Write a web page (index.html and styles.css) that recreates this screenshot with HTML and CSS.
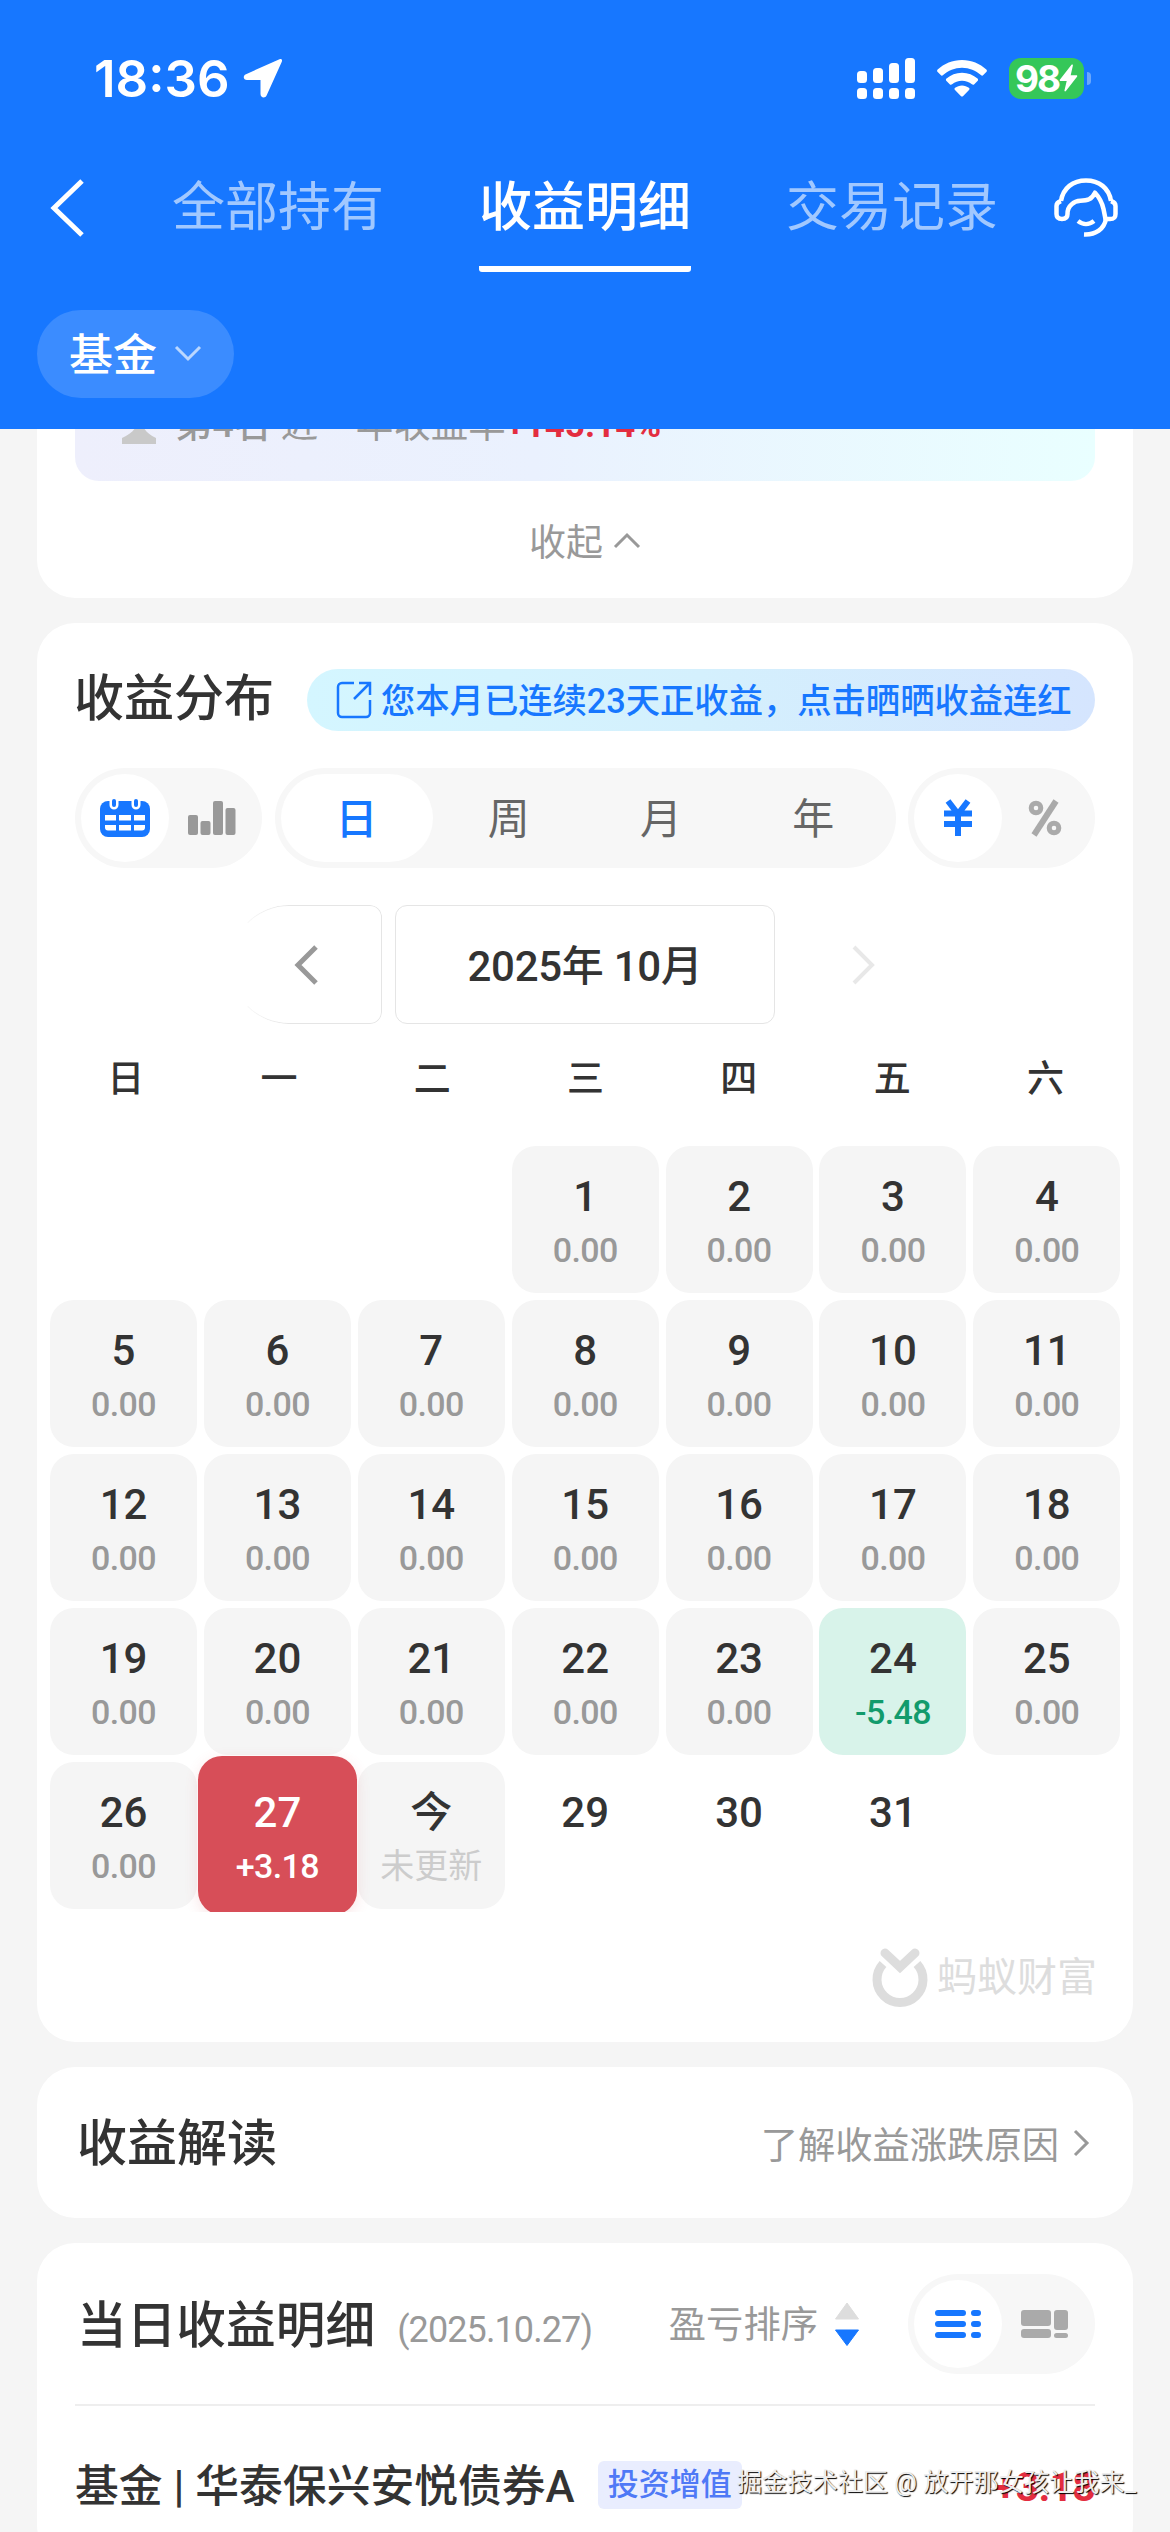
FILE: index.html
```html
<!DOCTYPE html>
<html lang="zh-CN">
<head>
  <meta charset="UTF-8">
  <meta name="viewport" content="width=device-width, initial-scale=1.0">
  <title>收益明细</title>
  <link rel="stylesheet" href="styles.css">
</head>
<body>
  <header class="header">
    <div class="status">
      <span class="time">18:36</span>
      <svg class="location" width="40" height="40" viewBox="0 0 40 40"><path d="M36.5 1.2 3 16.2c-3.600 1.600-2.600 5.800 1 5.800h13.500v14c0 4 4.800 4.600 6.200 1.200L38.800 3.700c.8-2-.4-3.300-2.300-2.500z" fill="#fff"/></svg>
      <div class="status-right">
        <svg width="58" height="41" viewBox="0 0 58 41" fill="#fff">
          <rect x="0" y="13" width="10" height="12" rx="3.500"/><rect x="16" y="10" width="10" height="15" rx="3.500"/><rect x="32" y="5" width="10" height="20" rx="3.500"/><rect x="48" y="0" width="10" height="25" rx="3.500"/>
          <rect x="0" y="30" width="10" height="11" rx="3.500"/><rect x="16" y="30" width="10" height="11" rx="3.500"/><rect x="32" y="30" width="10" height="11" rx="3.500"/><rect x="48" y="30" width="10" height="11" rx="3.500"/>
        </svg>
        <svg class="wifi" width="50" height="37" viewBox="0 0 50 37" fill="#fff">
          <path d="M25 0C15.500 0 7 3.600.7 9.600c-.8.8-.8 1.700 0 2.500l3 3c.7.700 1.600.700 2.400 0C11.200 10.500 17.700 7.700 25 7.700s13.800 2.800 18.900 7.400c.8.700 1.700.700 2.400 0l3-3c.8-.8.8-1.700 0-2.500C43 3.600 34.500 0 25 0z"/>
          <path d="M25 12.700c-6 0-11.400 2.200-15.500 5.900-.8.800-.8 1.700 0 2.500l3.200 3.100c.7.700 1.600.700 2.400.1 2.700-2.300 6.100-3.600 9.900-3.600s7.200 1.300 9.900 3.600c.8.600 1.700.600 2.400-.1l3.200-3.100c.8-.8.8-1.700 0-2.500-4.100-3.700-9.500-5.900-15.500-5.900z"/>
          <path d="M25 25.400c-2.600 0-5 .9-6.900 2.400-.8.700-.8 1.500-.1 2.200l5.800 6c.8.800 1.600.800 2.400 0l5.800-6c.7-.7.700-1.500-.1-2.200-1.900-1.500-4.300-2.400-6.900-2.400z"/>
        </svg>
        <div class="battery">98<svg width="19" height="28" viewBox="0 0 19 28"><path d="M12.500.8 1 15.500c-.6.800-.2 1.500.7 1.500h6L5.500 26.300c-.3 1.200.7 1.500 1.400.7L18 12.700c.6-.8.200-1.500-.7-1.500h-5.600L13.900 1.500c.2-1.100-.7-1.500-1.400-.7z" fill="#fff"/></svg></div>
        <span class="battery-cap"></span>
      </div>
    </div>
    <nav class="nav">
      <svg class="back" width="36" height="58" viewBox="0 0 36 58"><path d="M32 2 4 29l28 27" fill="none" stroke="#fff" stroke-width="5"/></svg>
      <div class="tabs">
        <a class="tab">全部持有</a>
        <a class="tab active">收益明细</a>
        <a class="tab">交易记录</a>
      </div>
      <svg class="service" width="64" height="60" viewBox="0 0 64 60" fill="none" stroke="#fff" stroke-width="4.500" stroke-linejoin="round">
        <path d="M7 23C9 10 19 2.500 32 2.500S55 10 57 23"/>
        <path d="M7 23c-3 1-4.500 3-4.500 5v8c0 3.500 2 5 5.500 5s5.500-1.500 5.500-5c0-5 1-7 4-9.500 3-3 6-3.700 9-3.800 7 0 11-1 14.500-8C45 19 48 24 49.500 31l2 10H56c4 0 5.500-1.500 5.500-5v-8c0-2-1.500-4-4.500-5"/>
        <path d="M52 41c-2 10-10 16-22 15.500M24 43c5 4 11 4 16 0"/>
      </svg>
    </nav>
    <div class="filter"><span>基金</span><svg width="28" height="18" viewBox="0 0 28 18"><path d="m2 2 12 12L26 2" fill="none" stroke="#fff" stroke-opacity=".65" stroke-width="3"/></svg></div>
  </header>

  <main class="main">
    <section class="card rank-card">
      <div class="rank">
        <svg class="medal" width="36" height="24" viewBox="0 0 36 24"><path d="M1 25v-6C7 16 12 13 14 9h9c2 4 6 7 12 10v6z" fill="#c9c9c9"/></svg>
        <p><span class="rank-name">第4名</span> 近一年收益率<b>+145.14%</b></p>
      </div>
      <div class="collapse">收起<svg width="28" height="18" viewBox="0 0 28 18"><path d="M2 16 14 4l12 12" fill="none" stroke="#999" stroke-width="3"/></svg></div>
    </section>

    <section class="card profit">
      <div class="profit-head">
        <h2>收益分布</h2>
        <a class="share"><svg width="36" height="38" viewBox="0 0 36 38" fill="none" stroke="#1777ff" stroke-width="2.500"><path d="M18 2H6a4 4 0 0 0-4 4v26a4 4 0 0 0 4 4h24a4 4 0 0 0 4-4V19M23 2h11v12M33 3 18 18"/></svg><span>您本月已连续23天正收益，点击晒晒收益连红</span></a>
      </div>

      <div class="switches">
        <div class="seg seg-small">
          <span class="on"><svg width="50" height="38" viewBox="0 0 50 38">
            <rect x="0" y="2" width="50" height="36" rx="8" fill="#1777ff"/>
            <path d="M5 16h11v5.500H5zM19 16h12v5.500H19zM34 16h11v5.500H34zM5 26h11v5.500H8q-3 0-3-3zM19 26h12v5.500H19zM34 26h11v2.500q0 3-3 3h-8z" fill="#fff"/>
            <path d="M14 2v4M36 2v4" stroke="#fff" stroke-width="9" stroke-linecap="round"/>
            <path d="M14 2v4M36 2v4" stroke="#1777ff" stroke-width="4" stroke-linecap="round"/>
          </svg></span>
          <span><svg width="48" height="34" viewBox="0 0 48 34" fill="#999"><rect x="0" y="14" width="10" height="20" rx="2"/><rect x="12.500" y="20" width="10" height="14" rx="2"/><rect x="25" y="0" width="10" height="34" rx="2"/><rect x="37.500" y="7" width="10" height="27" rx="2"/></svg></span>
        </div>
        <div class="seg seg-period">
          <span class="on">日</span><span>周</span><span>月</span><span>年</span>
        </div>
        <div class="seg seg-small">
          <span class="on"><svg width="28" height="36" viewBox="0 0 28 36" fill="none" stroke="#1777ff" stroke-width="6"><path d="m4 1 10 13L24 1M0 13.500h28M0 24h28M14 12v24"/></svg></span>
          <span><svg width="32" height="36" viewBox="0 0 32 36" fill="none" stroke="#aaa" stroke-width="5"><circle cx="7" cy="8" r="4.800"/><circle cx="25" cy="28" r="4.800"/><path d="M27 1 5 35" stroke-width="6"/></svg></span>
        </div>
      </div>

      <div class="month">
        <span class="prev"><svg width="26" height="40" viewBox="0 0 26 40"><path d="M23 2 5 20l18 18" fill="none" stroke="#999" stroke-width="5"/></svg></span>
        <span class="month-name">2025年 10月</span>
        <span class="next"><svg width="26" height="40" viewBox="0 0 26 40"><path d="m3 2 18 18L3 38" fill="none" stroke="#e8e8e8" stroke-width="4"/></svg></span>
      </div>

      <div class="week">
        <span>日</span><span>一</span><span>二</span><span>三</span><span>四</span><span>五</span><span>六</span>
      </div>

      <div class="days">
        <div class="day first"><b>1</b><i>0.00</i></div>
        <div class="day"><b>2</b><i>0.00</i></div>
        <div class="day"><b>3</b><i>0.00</i></div>
        <div class="day"><b>4</b><i>0.00</i></div>
        <div class="day"><b>5</b><i>0.00</i></div>
        <div class="day"><b>6</b><i>0.00</i></div>
        <div class="day"><b>7</b><i>0.00</i></div>
        <div class="day"><b>8</b><i>0.00</i></div>
        <div class="day"><b>9</b><i>0.00</i></div>
        <div class="day"><b>10</b><i>0.00</i></div>
        <div class="day"><b>11</b><i>0.00</i></div>
        <div class="day"><b>12</b><i>0.00</i></div>
        <div class="day"><b>13</b><i>0.00</i></div>
        <div class="day"><b>14</b><i>0.00</i></div>
        <div class="day"><b>15</b><i>0.00</i></div>
        <div class="day"><b>16</b><i>0.00</i></div>
        <div class="day"><b>17</b><i>0.00</i></div>
        <div class="day"><b>18</b><i>0.00</i></div>
        <div class="day"><b>19</b><i>0.00</i></div>
        <div class="day"><b>20</b><i>0.00</i></div>
        <div class="day"><b>21</b><i>0.00</i></div>
        <div class="day"><b>22</b><i>0.00</i></div>
        <div class="day"><b>23</b><i>0.00</i></div>
        <div class="day loss"><b>24</b><i>-5.48</i></div>
        <div class="day"><b>25</b><i>0.00</i></div>
        <div class="day"><b>26</b><i>0.00</i></div>
        <div class="day selected"><b>27</b><i>+3.18</i></div>
        <div class="day today"><b>今</b><i>未更新</i></div>
        <div class="day future"><b>29</b></div>
        <div class="day future"><b>30</b></div>
        <div class="day future"><b>31</b></div>
      </div>

      <div class="brand">
        <svg width="56" height="57" viewBox="0 0 56 57" fill="none" stroke="#ddd"><path d="M11 15a23 23 0 1 0 34 0" stroke-width="9"/><path d="m13 4 15 14L43 4" stroke-width="9" stroke-linecap="round"/></svg>
        <span>蚂蚁财富</span>
      </div>
    </section>

    <section class="card explain">
      <h2>收益解读</h2>
      <a>了解收益涨跌原因<svg width="18" height="28" viewBox="0 0 18 28"><path d="m2 2 12 12L2 26" fill="none" stroke="#999" stroke-width="3"/></svg></a>
    </section>

    <section class="card detail">
      <div class="detail-head">
        <h2>当日收益明细</h2>
        <span class="date">(2025.10.27)</span>
        <span class="sort"><span>盈亏排序</span><svg width="26" height="44" viewBox="0 0 26 44"><path d="M13 1 24.500 17h-23z" fill="#ddd" stroke="#ddd" stroke-linejoin="round"/><path d="M1.500 28h23L13 43.500z" fill="#1777ff" stroke="#1777ff" stroke-linejoin="round"/></svg></span>
        <div class="seg seg-small">
          <span class="on"><svg width="48" height="30" viewBox="0 0 48 30" stroke="#1777ff" stroke-width="6" stroke-linecap="round"><path d="M4 4h25M4 15h25M4 26h25M40 4h4M40 15h4M40 26h4"/></svg></span>
          <span><svg width="48" height="30" viewBox="0 0 48 30" fill="#aaa"><rect x="0" y="1" width="30" height="16" rx="3"/><rect x="0" y="20" width="30" height="9" rx="3"/><rect x="33" y="1" width="14" height="20" rx="3"/><rect x="33" y="24" width="14" height="5" rx="2.500"/></svg></span>
        </div>
      </div>
      <div class="fund">
        <span class="fund-name">基金 | 华泰保兴安悦债券A</span>
        <span class="tag">投资增值</span>
        <span class="gain">+3.18</span>
      </div>
    </section>
  </main>
  <div class="watermark">掘金技术社区 @ 放开那女孩让我来_</div>
</body>
</html>
```

FILE: styles.css
```css
* {
  box-sizing: border-box;
}

body {
  position: relative;
  width: 1170px;
  height: 2532px;
  margin: 0;
  overflow: hidden;
  background-color: #f5f5f5;
  color: #333;
  font-family: Roboto, "Noto Sans CJK SC", sans-serif;
}

svg {
  display: block;
  flex: none;
  overflow: visible;
}

h2, p {
  margin: 0;
}

h2 {
  font-size: 50px;
  font-weight: 500;
  line-height: 60px;
  white-space: nowrap;
}

/* 顶部 */
.header {
  height: 429px;
  background-color: #1777ff;
  color: #fff;
}

.status {
  display: flex;
  align-items: center;
  height: 156px;
  padding: 0 79px 0 94px;
}

.time {
  width: 149px;
  font-family: Inter, sans-serif;
  font-size: 51px;
  font-weight: 600;
}

.status-right {
  display: flex;
  align-items: center;
  margin-left: auto;
}

.wifi {
  margin: 0 22px;
}

.battery {
  display: flex;
  align-items: center;
  justify-content: center;
  width: 75px;
  height: 41px;
  border-radius: 12px;
  background-color: #35c759;
  font-family: Inter, sans-serif;
  font-size: 37px;
  font-weight: 700;
  letter-spacing: -2px;
}

.battery-cap {
  width: 4px;
  height: 13px;
  margin-left: 3px;
  border-radius: 0 4px 4px 0;
  background-color: #6ba8fc;
}

.nav {
  display: flex;
  align-items: center;
  height: 104px;
  padding: 0 52px 0 50px;
}

.tabs {
  display: flex;
  gap: 95px;
  margin-left: 86px;
}

.tab {
  font-size: 53px;
  line-height: 107px;
  color: #a1c8ff;
}

.tab.active {
  height: 117px;
  border-bottom: 6px solid #fff;
  margin-bottom: -12px;
  border-radius: 3px;
  color: #fff;
  font-weight: 500;
}

.service {
  margin-left: auto;
}

.filter {
  display: flex;
  align-items: center;
  gap: 17px;
  width: 197px;
  height: 88px;
  margin: 50px 0 0 37px;
  padding-left: 32px;
  border-radius: 44px;
  background-color: #3b8cff;
  font-size: 44px;
  font-weight: 500;
}

.filter span {
  margin-top: -4px;
}

/* 卡片 */
.main {
  display: flex;
  flex-direction: column;
  gap: 25px;
  padding: 0 37px;
}

.card {
  border-radius: 38px;
  background-color: #fff;
}

.rank-card {
  height: 169px;
  border-radius: 0 0 38px 38px;
}

.rank {
  display: flex;
  height: 52px;
  margin: 0 38px;
  padding-left: 46px;
  overflow: hidden;
  border-radius: 0 0 24px 24px;
  background: linear-gradient(90deg, #eeeffc, #eaf1fe 45%, #e9ffff);
  color: #999;
  font-size: 37.500px;
}

.medal {
  margin-top: -10px;
}

.rank p {
  margin: -35px 0 0 18px;
  line-height: 60px;
  white-space: nowrap;
}

.rank-name {
  font-weight: 500;
}

.rank b {
  color: #e32d40;
  font-weight: 700;
  font-size: 35px;
}

.collapse {
  display: flex;
  align-items: center;
  justify-content: center;
  gap: 10px;
  height: 117px;
  padding-top: 1px;
  color: #999;
  font-size: 37px;
}

.profit {
  height: 1419px;
  overflow: hidden;
}

.profit-head {
  display: flex;
  align-items: center;
  justify-content: space-between;
  height: 62px;
  margin: 46px 38px 0;
}

.profit-head h2 {
  margin: -3px 0 0 -1px;
}

.share {
  display: flex;
  align-items: center;
  gap: 9px;
  width: 788px;
  height: 62px;
  padding-left: 29px;
  border-radius: 31px;
  background: linear-gradient(90deg, #d4f6ff, #d4f0fd 50%, #d5e5fe);
  color: #1777ff;
  font-size: 34.300px;
  font-weight: 500;
  white-space: nowrap;
}

.share span {
  margin-top: -5px;
}

.switches {
  display: flex;
  justify-content: space-between;
  margin: 37px 38px 0;
}

.seg {
  display: flex;
  height: 100px;
  padding: 6px;
  border-radius: 50px;
  background-color: #f7f7f7;
}

.seg span {
  display: flex;
  flex: 1;
  align-items: center;
  justify-content: center;
  border-radius: 44px;
  color: #666;
  font-size: 42px;
}

.seg .on {
  background-color: #fff;
  color: #1777ff;
  font-weight: 500;
}

.seg-small {
  width: 187px;
}

.seg-period {
  width: 621px;
}

.seg-period span {
  padding-bottom: 5px;
}

.month {
  display: flex;
  gap: 13px;
  height: 119px;
  margin: 37px 0 0 193px;
}

.month span {
  display: flex;
  align-items: center;
  justify-content: center;
}

.prev {
  width: 152px;
  border: 1px solid #e5e5e5;
  border-left-color: transparent;
  border-radius: 59px 12px 12px 59px;
  -webkit-mask-image: linear-gradient(90deg, transparent, #000 40%);
  mask-image: linear-gradient(90deg, transparent, #000 40%);
}

.month .month-name {
  width: 380px;
  padding-bottom: 4px;
  border: 1px solid #e5e5e5;
  border-radius: 12px;
  font-size: 42px;
  font-weight: 500;
  letter-spacing: -.3px;
}

.next {
  width: 152px;
}

.week {
  display: grid;
  grid-template-columns: repeat(7, 153.300px);
  margin: 26px 0 0 12px;
  font-size: 37px;
  font-weight: 500;
  line-height: 60px;
  text-align: center;
}

.days {
  display: grid;
  grid-template-columns: repeat(7, 147px);
  grid-auto-rows: 147px;
  gap: 6.900px;
  margin: 36px 0 0;
  padding: 0 13px 3px;
  overflow: hidden;
}

.day {
  display: flex;
  flex-direction: column;
  align-items: center;
  padding-top: 26px;
  border-radius: 24px;
  background-color: #f5f5f5;
}

.day.first {
  grid-column: 4;
}

.day b {
  font-size: 42px;
  font-weight: 500;
  line-height: 50px;
}

.day i {
  margin-top: 8px;
  color: #999;
  font-size: 34px;
  font-style: normal;
  font-weight: 500;
  letter-spacing: -.6px;
  line-height: 40px;
}

.day.loss {
  background-color: #d8f3ea;
}

.day.loss i {
  color: #129b6c;
}

/* 选中的日期比其他格子大一圈 */
.day.selected {
  z-index: 1;
  margin: -6px;
  padding-top: 32px;
  background-color: #d74e58;
  box-shadow: 0 4px 14px rgba(215, 78, 88, .15);
  color: #fff;
}

.day.selected i {
  color: #fff;
}

.day.today i {
  color: #ccc;
  font-weight: 400;
  letter-spacing: 0;
}

.day.future {
  background: none;
}

.brand {
  display: flex;
  align-items: center;
  justify-content: flex-end;
  gap: 9px;
  margin: 37px 36px 0 0;
  color: #ddd;
  font-size: 40px;
  line-height: 57px;
}

.explain {
  display: flex;
  align-items: center;
  justify-content: space-between;
  height: 151px;
  padding: 3px 42px 0 40px;
}

.explain a {
  display: flex;
  align-items: center;
  gap: 14px;
  margin-top: -3px;
  color: #999;
  font-size: 37.300px;
}

.detail {
  height: 320px;
  padding: 0 38px;
}

.detail-head {
  display: flex;
  align-items: center;
  height: 163px;
  padding-left: 2px;
  border-bottom: 2px solid #eee;
}

.detail-head h2 {
  padding-top: 4px;
  font-size: 49.700px;
}

.date {
  margin: 12px 0 0 22px;
  color: #999;
  font-size: 36px;
  letter-spacing: -.9px;
}

.sort {
  display: flex;
  align-items: center;
  gap: 16px;
  margin-left: auto;
  margin-right: 48px;
  color: #999;
  font-size: 37.300px;
}

.sort span {
  margin-top: -3px;
}

.fund {
  display: flex;
  align-items: center;
  height: 157px;
}

.fund-name {
  margin-top: -3px;
  font-size: 43.800px;
  font-weight: 500;
  white-space: nowrap;
}

.tag {
  height: 48px;
  margin-left: 23px;
  padding: 0 10px;
  border-radius: 6px;
  background-color: #e9edfe;
  color: #4f79f6;
  font-size: 31px;
  font-weight: 500;
  line-height: 48px;
}

.gain {
  margin: 5px 0 0 auto;
  color: #e32d40;
  font-size: 41px;
  font-weight: 700;
  letter-spacing: -.8px;
}

/* 图片水印，浮在内容上方 */
.watermark {
  position: absolute;
  right: 34px;
  bottom: 31px;
  color: #eee;
  font-size: 25.200px;
  line-height: 36px;
  text-shadow: 1px 1px 1px #000;
  white-space: nowrap;
}
```
